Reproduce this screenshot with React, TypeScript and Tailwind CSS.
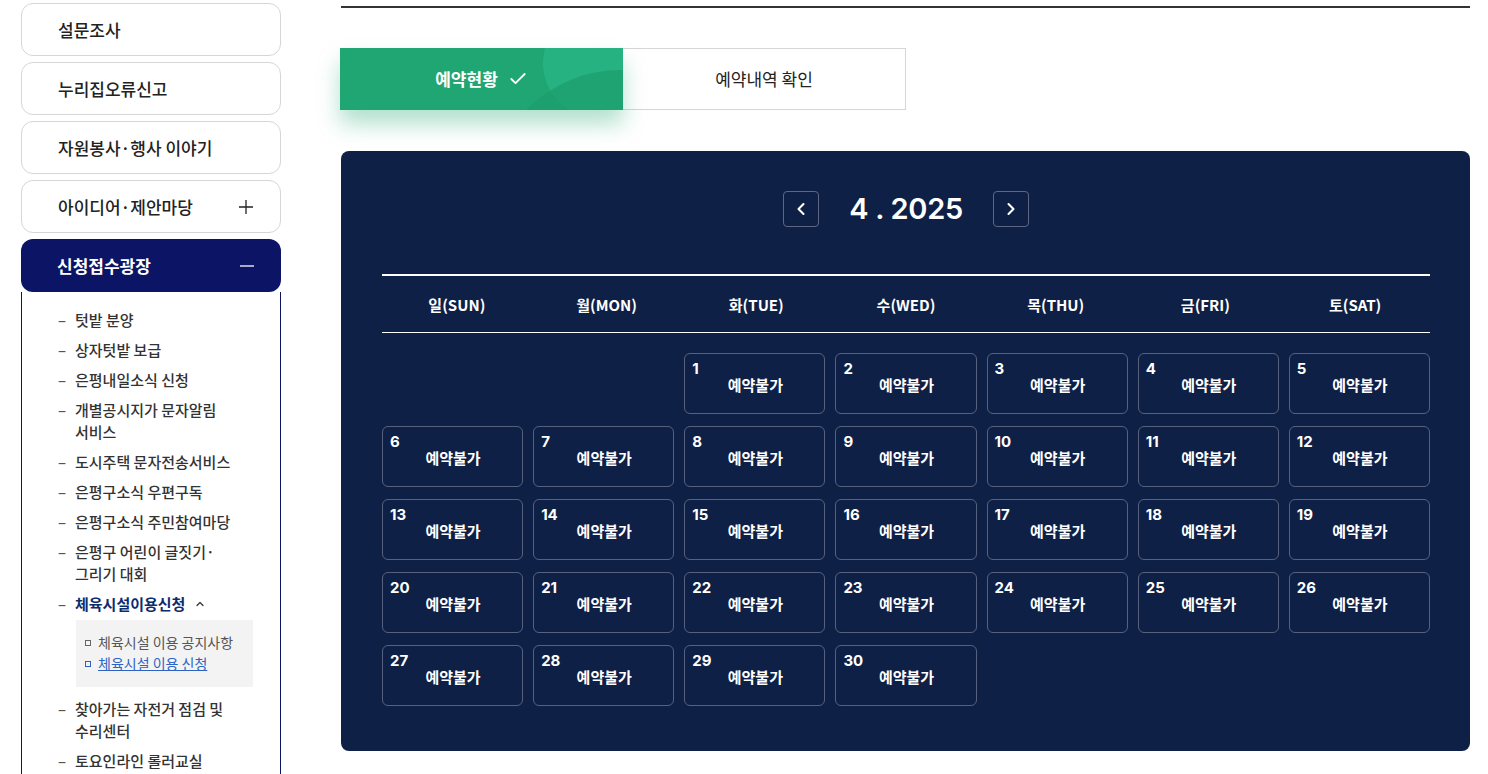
import React from 'react';
import { Check, ChevronLeft, ChevronRight, ChevronUp } from 'lucide-react';

const kr = { fontFamily: '"Noto Sans CJK KR", "Noto Sans", sans-serif' };
const num = { fontFamily: 'Inter, "Noto Sans CJK KR", sans-serif' };

const topMenus = ['설문조사', '누리집오류신고', '자원봉사·행사 이야기'];

const subMenus = [
  ['텃밭 분양'],
  ['상자텃밭 보급'],
  ['은평내일소식 신청'],
  ['개별공시지가 문자알림', '서비스'],
  ['도시주택 문자전송서비스'],
  ['은평구소식 우편구독'],
  ['은평구소식 주민참여마당'],
  ['은평구 어린이 글짓기·', '그리기 대회'],
];

const days = ['일(SUN)', '월(MON)', '화(TUE)', '수(WED)', '목(THU)', '금(FRI)', '토(SAT)'];

const PlusIcon = () => (
  <svg width="16" height="16" viewBox="0 0 16 16" className="text-[#222]">
    <path d="M8 1v14M1 8h14" stroke="currentColor" strokeWidth="1.3" />
  </svg>
);

const MinusIcon = () => (
  <svg width="16" height="16" viewBox="0 0 16 16" className="text-white">
    <path d="M1 8h14" stroke="currentColor" strokeWidth="1.3" />
  </svg>
);

const Sidebar = () => {
  return (
    <aside className="w-[260px] ml-[21px] mt-[3px] shrink-0" style={kr}>
      <div className="flex flex-col gap-[6px]">
        {topMenus.map((m) => (
          <div key={m} className="h-[53px] border border-[#d6d6d6] rounded-[12px] bg-white flex items-center pl-[36px] text-[17px] font-medium text-[#222]">
            {m}
          </div>
        ))}
        <div className="h-[53px] border border-[#d6d6d6] rounded-[12px] bg-white flex items-center justify-between pl-[36px] pr-[26px] text-[17px] font-medium text-[#222]">
          <span>아이디어·제안마당</span>
          <PlusIcon />
        </div>
        <div>
          <div className="h-[53px] rounded-[12px] bg-[#0c1466] flex items-center justify-between pl-[36px] pr-[26px] text-[17px] font-bold text-white">
            <span>신청접수광장</span>
            <MinusIcon />
          </div>
          <ul className="border-x border-[#0c1466] pt-[17px] pb-6 pl-[36px] pr-4 flex flex-col gap-2 text-[15px] leading-[22px] font-medium text-[#333]">
            {subMenus.map((lines) => (
              <li key={lines[0]} className="flex">
                <span className="w-[17px] shrink-0 text-[#555]">–</span>
                <span>
                  {lines.map((l) => (
                    <span key={l} className="block">{l}</span>
                  ))}
                </span>
              </li>
            ))}
            <li>
              <div className="flex items-center">
                <span className="w-[17px] shrink-0 text-[#555]">–</span>
                <span className="font-bold text-[#0d2c6c]">체육시설이용신청</span>
                <ChevronUp size={12} strokeWidth={2.5} className="ml-[9px] text-[#333]" />
              </div>
              <div className="ml-[18px] mt-[5px] w-[177px] bg-[#f3f3f3] pt-[12px] pb-[13px] px-[9px] text-[14px] leading-[21px] font-normal">
                <div className="flex items-center gap-[7px] text-[#555]">
                  <span className="w-[6px] h-[6px] border border-[#666]" />
                  <span>체육시설 이용 공지사항</span>
                </div>
                <div className="flex items-center gap-[7px] text-[#2e62c4]">
                  <span className="w-[6px] h-[6px] border border-[#2e62c4]" />
                  <span className="underline">체육시설 이용 신청</span>
                </div>
              </div>
            </li>
            <li className="flex mt-[3px]">
              <span className="w-[17px] shrink-0 text-[#555]">–</span>
              <span>
                <span className="block">찾아가는 자전거 점검 및</span>
                <span className="block">수리센터</span>
              </span>
            </li>
            <li className="flex">
              <span className="w-[17px] shrink-0 text-[#555]">–</span>
              <span>토요인라인 롤러교실</span>
            </li>
          </ul>
        </div>
      </div>
    </aside>
  );
};

const Tabs = () => {
  return (
    <div className="flex mt-[40px] ml-[-1px]" style={kr}>
      <div className="relative w-[283px] h-[62px] bg-[#20a672] overflow-hidden flex items-center justify-center gap-[10px] text-white font-bold text-[17px] shadow-[0_14px_22px_rgba(32,166,114,0.35)]">
        <span className="absolute -right-[30px] -top-[40px] w-[110px] h-[110px] rounded-full bg-[#29b684] opacity-80" />
        <span className="absolute left-[150px] top-[22px] w-[260px] h-[260px] rounded-full bg-[#1d9c6c] opacity-70" />
        <span className="relative">예약현황</span>
        <Check size={20} strokeWidth={2.2} className="relative" />
      </div>
      <div className="w-[283px] h-[62px] border border-[#d6d6d6] border-l-0 bg-white flex items-center justify-center text-[17px] text-[#222]">
        예약내역 확인
      </div>
    </div>
  );
};

const Calendar = () => {
  const cells: (number | null)[] = [null, null];
  for (let d = 1; d <= 30; d++) cells.push(d);
  return (
    <div className="mt-[41px] bg-[#0f2046] rounded-[8px] pt-[40px] pb-[45px] pr-[40px] pl-[41px]" style={kr}>
      <div className="flex items-center justify-center gap-[30px]">
        <button className="w-[36px] h-[36px] border border-[#5b6785] rounded-[4px] flex items-center justify-center text-white">
          <ChevronLeft size={20} strokeWidth={2.5} />
        </button>
        <div className="text-white text-[29px] leading-[36px] font-semibold tracking-[-0.3px] whitespace-nowrap text-center" style={num}>
          4 . 2025
        </div>
        <button className="w-[36px] h-[36px] border border-[#5b6785] rounded-[4px] flex items-center justify-center text-white">
          <ChevronRight size={20} strokeWidth={2.5} />
        </button>
      </div>
      <div className="mt-[47px] border-t-2 border-white border-b border-b-white grid grid-cols-7 h-[59px] items-center">
        {days.map((d) => (
          <div key={d} className="text-center text-white font-bold text-[15px] pt-[2px]">{d}</div>
        ))}
      </div>
      <div className="mt-[20px] grid grid-cols-7 gap-x-[10px] gap-y-[12px]">
        {cells.map((d, i) =>
          d === null ? (
            <div key={`e${i}`} />
          ) : (
            <div key={d} className="h-[61px] border border-[#56617e] rounded-[6px] px-[7px] pt-[5px] text-white">
              <div className="text-[15px] font-bold leading-[20px]" style={num}>{d}</div>
              <div className="text-center font-bold text-[15px] leading-[20px] -mt-[4px] pl-[1px]">예약불가</div>
            </div>
          )
        )}
      </div>
    </div>
  );
};

export default function App() {
  return (
    <div className="flex bg-white min-h-screen">
      <Sidebar />
      <main className="ml-[60px] w-[1129px] pt-[6px]">
        <div className="border-t-2 border-[#333]" />
        <Tabs />
        <Calendar />
      </main>
    </div>
  );
}
